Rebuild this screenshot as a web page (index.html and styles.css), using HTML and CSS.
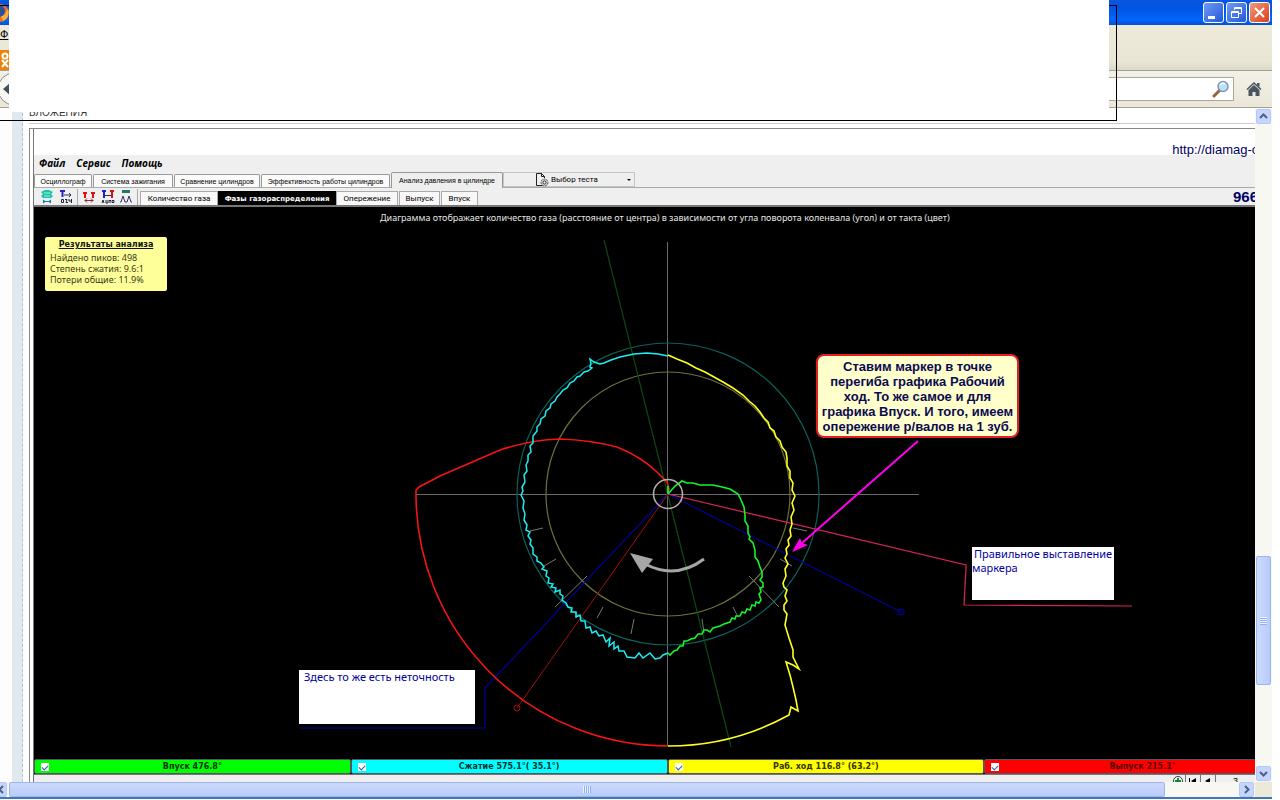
FILE: index.html
```html
<!DOCTYPE html>
<html lang="ru">
<head>
<meta charset="utf-8">
<title>Фазы газораспределения</title>
<link rel="stylesheet" href="styles.css">
</head>
<body>
<div class="window">
  <header class="titlebar">
    <svg class="firefox" width="10" height="22" viewBox="0 0 10 22"><circle cx="0" cy="11" r="9" fill="#e8731c"/><circle cx="-1" cy="9" r="6" fill="#2c4f9e"/><path d="M1 14q4 0 5-4l2-3q2 9-5 12z" fill="#f6b03c"/></svg>
    <div class="winbuttons">
      <button class="winbtn" aria-label="Свернуть"><svg width="15" height="15" viewBox="0 0 15 15"><path d="M2 11h7v3H2z" fill="#fff"/></svg></button>
      <button class="winbtn" aria-label="Восстановить"><svg width="15" height="15" viewBox="0 0 15 15" fill="none" stroke="#fff"><path d="M5.500 5V2.500h7v6H10M5 3.500h8M2.500 6.500h7v6h-7zM2 7.500h8"/></svg></button>
      <button class="winbtn close" aria-label="Закрыть"><svg width="15" height="15" viewBox="0 0 15 15"><path d="M3 3l9 9M12 3l-9 9" stroke="#fff" stroke-width="2"/></svg></button>
    </div>
  </header>
  <div class="chrome">
    <span class="chrome-menu">Ф</span>
    <svg width="10" height="20" viewBox="0 0 10 20"><path d="M0 0h10v20H0z" fill="#ee8208"/><circle cx="5" cy="6" r="2.500" fill="none" stroke="#fff" stroke-width="2"/><path d="M2 10l6 7M8 10l-6 7" stroke="#fff" stroke-width="2"/></svg>
  </div>
  <div class="navbar">
    <svg class="back" width="10" height="34" viewBox="0 0 10 34"><circle cx="14" cy="17" r="16" fill="#f7f7f4" stroke="#8a8a80"/><path d="M3 17l8-7v14z" fill="#43505c"/></svg>
    <div class="search"><input type="text" aria-label="Поиск">
      <svg width="18" height="18" viewBox="0 0 18 18"><path d="M8 10l-6 6" stroke="#9a6337" stroke-width="3" stroke-linecap="round"/><circle cx="11" cy="6.500" r="5" fill="#b9e2fa" stroke="#7f96b4" stroke-width="1.500"/><path d="M8 5q2-3 5-1" stroke="#fff" stroke-width="1.500" fill="none"/></svg>
    </div>
    <button class="home" aria-label="Домой"><svg width="16" height="16" viewBox="0 0 16 16" fill="#4b5560"><path d="M8 1l7.500 7-1 1L8 3 1.500 9l-1-1z"/><path d="M8 4l5.500 5v6H9.500v-4h-3v4H2.500V9zM11 2h2.500v4L11 4z"/></svg></button>
  </div>

  <div class="view">
    <main class="page">
      <div class="gutter"></div>
      <div class="post">
        <h2 class="attach-title">ВЛОЖЕНИЯ</h2>
        <div class="attachment">
          <div class="shot">
            <div class="url">http://diamag-o</div>
            <nav class="menu"><button>Файл</button><button>Сервис</button><button>Помощь</button></nav>
            <div class="tabs">
              <button class="tab t1">Осциллограф</button><button class="tab t2">Система зажигания</button><button class="tab t3">Сравнение цилиндров</button><button class="tab t4">Эффективность работы цилиндров</button><button class="tab t5 current">Анализ давления в цилиндре</button>
              <button class="choose"><svg width="14" height="14" viewBox="0 0 14 14" fill="none" stroke="#222"><path d="M7 12.500H1.500v-12h5l3 3V5M6.500.5v3h3"/><circle cx="9.500" cy="9.500" r="3.500" fill="#ccc" stroke="#555" stroke-dasharray="2 1"/><circle cx="9.500" cy="9.500" r="1.500" fill="#fff" stroke="#333"/></svg><span>Выбор теста</span><i class="caret"></i></button>
            </div>
            <div class="tools">
              <div class="icons">
                <svg width="16" height="16" viewBox="0 0 16 16"><path d="M4 2l2-1h4l2 1 2 1-2 2 2 2-2 2H4L2 7l2-2-2-2z" fill="#20c0a8"/><path d="M5 4h6M5 7h6" stroke="#8fe"/><path d="M4 12.500h8" stroke="#147bb4"/><path d="M4 10.500l3 2-3 2zM12 10.500l-3 2 3 2z" fill="#147bb4"/></svg>
                <svg width="14" height="16" viewBox="0 0 14 16"><path d="M1 2h5M3.500 2v6" stroke="#22c" stroke-width="2"/><path d="M5 6h7M10 4l2 2-2 2" stroke="#235" fill="none"/><path d="M2.500 10.500h2v3h-2zM6 10.500h2l-1 3h2M10 10v2h2M12.500 10v4" stroke="#224" fill="none"/></svg>
                <span class="split"></span>
                <svg width="14" height="16" viewBox="0 0 14 16"><path d="M1 4h4M9 4h4M3 4v5M11 4v5" stroke="#d11" stroke-width="2"/><path d="M3 11.500h8M5 9.500l-2 2 2 2M9 9.500l2 2-2 2" stroke="#922" fill="none"/></svg>
                <svg width="14" height="16" viewBox="0 0 14 16"><path d="M1 2h4M3 2v7" stroke="#22c" stroke-width="2"/><path d="M9 2h4M11 2v7" stroke="#d11" stroke-width="2"/><path d="M4 6.500h6" stroke="#333"/><path d="M1 14l1-3 1 3M5 11v3h2v-3M8 11.500h2M9 11v3M11 11.500h2v2h-2z" stroke="#224" fill="none"/></svg>
                <svg width="14" height="16" viewBox="0 0 14 16"><path d="M3 1h8v3H3z" fill="#276"/><path d="M1 13h1l2-6 2 6h2l2-6 2 6h1" stroke="#336" fill="none"/></svg>
                <span class="split"></span>
              </div>
              <div class="subtabs"><button class="sub s1">Количество газа</button><button class="sub s2 on">Фазы газораспределения</button><button class="sub s3">Опережение</button><button class="sub s4">Выпуск</button><button class="sub s5">Впуск</button></div>
              <b class="count">966</b>
            </div>
            <section class="plot">
              <svg class="canvas" viewBox="34 207 1221 551" width="1221" height="551" fill="none">
                <g stroke="#6a6a6a"><path d="M416 494.500H919M667.500 242V746"/></g>
                <circle cx="668" cy="494" r="151" stroke="#0a605a" stroke-width="1.200"/>
                <circle cx="668" cy="494" r="122" stroke="#706f3e" stroke-width="1.200"/>
                <path stroke="#777" d="M530 531l13-3M544 566l12-7M555 607l32-31M597 618l6-11M631 634l3-15M702 619l2 14M733 607l5 10M749 576l30 31M780 559l12 7M793 528l14 3"/>
                <path d="M604 240L731 747" stroke="#0b4a12" stroke-width="1.200"/>
                <g stroke="#00009c" stroke-width="1.200"><path d="M668 494L901 612"/><circle cx="901" cy="612" r="3"/><path d="M668 494L485 688V728H300"/></g>
                <g stroke="#a11010"><path d="M668 494L517 708"/><circle cx="517" cy="708" r="3"/></g>
                <path d="M668 494L966 565v3L964 605 1132 606" stroke="#d9245e" stroke-width="1.200"/>
                <path d="M668 746A252 252 0 0 1 416 494L416 490 419 487 440 476 470 463 500 450Q530 440 560 439 590 440 617 447 640 456 657 472L667 482 669 489 668 494" stroke="#f51414" stroke-width="1.600"/>
                <path d="M668 494L668 486M668 494L675 486 682 481 687 483 693 483 700 485 713 485 722 487 730 489 738 494 741 500 744 507 745 515 745 521 748 526 748 533 750 537 749 539 753 543 755 550 755 557 758 561 760 567 762 572 762 577 760 580 763 583 763 587 760 588 761 592 759 594 761 600 759 603 756 602 755 606 752 605 750 610 747 609 745 613 742 612 740 616 736 616 735 619 732 618 730 622 724 624 720 626 713 628 710 632 707 630 704 630 702 634 698 634 695 638 691 639 687 641 684 641 683 646 680 646 677 650 674 651 670 655 668 653" stroke="#12f528" stroke-width="1.600"/>
                <path d="M668 356L658 354 647 353 634 354 620 357 611 360 604 363 600 364 597 363 594 362 590 359 591 363 590 367 592 368 588 371 584 372 580 376 577 377 574 381 570 383 567 388 563 390 560 394 557 397 555 401 551 404 550 408 546 411 545 416 541 419 540 424 537 427 537 431 533 436 533 443 530 446 531 452 528 455 528 461 526 465 527 471 524 475 525 482 522 487 523 491 521 495 524 501 523 508 525 514 524 520 527 525 526 530 530 532 528 536 531 540 530 544 533 548 533 554 537 557 537 561 541 563 544 567 542 569 547 571 546 576 549 578 548 583 553 584 551 587 556 588 555 592 560 590 560 594 563 596 562 600 566 603 568 607 572 608 571 612 576 612 576 617 580 615 581 621 585 621 586 628 590 627 592 633 596 631 599 636 603 635 606 642 610 638 609 646 614 642 614 649 618 646 619 651 624 651 627 657 635 658 639 653 643 658 650 653 655 659 660 658 663 655 668 653" stroke="#18eff2" stroke-width="1.500"/>
                <path d="M668 355L677 359 687 363 696 368 705 372 714 377 723 382 733 388 743 395 749 401 755 406 760 412 764 418 768 422 770 428 774 431 776 437 780 441 782 447 786 452 787 458 787 466 790 471 790 478 793 483 792 490 795 496 792 503 794 510 791 517 792 524 790 530 791 536 788 540 789 545 786 549 787 554 785 558 788 564 785 569 786 576 783 583 784 587 787 590 785 596 787 601 784 605 784 610 787 614 785 625 789 638 793 650 793 657 799 669 793 665 786 662 790 675 793 687 796 700 798 711 791 707 790 711 789 715A252 252 0 0 1 668 746" stroke="#ffff20" stroke-width="1.600"/>
                <circle cx="668" cy="494" r="14.500" stroke="#b5a9a9" stroke-width="1.600"/>
                <path d="M704 559Q676 580 645 564" stroke="#a6a6a6" stroke-width="3"/><path d="M630 553L653 559 642 573z" fill="#a6a6a6"/>
                <path d="M918 441L802 543" stroke="#f0e" stroke-width="2"/><path d="M792 552L800 538 802 543 808 545z" fill="#f0e"/>
              </svg>
              <p class="caption">Диаграмма отображает количество газа (расстояние от центра) в зависимости от угла поворота коленвала (угол) и от такта (цвет)</p>
              <div class="results"><h3>Результаты анализа</h3><p>Найдено пиков: 498</p><p>Степень сжатия: 9.6:1</p><p>Потери общие: 11.9%</p></div>
              <div class="callout">Ставим маркер в точке<br>перегиба графика Рабочий<br>ход. То же самое и для<br>графика Впуск. И того, имеем<br>опережение р/валов на 1 зуб.</div>
              <div class="note right">Правильное выставление<br>маркера</div>
              <div class="note left">Здесь то же есть неточность</div>
            </section>
            <div class="legend">
              <label class="bar intake"><input type="checkbox" checked><span>Впуск 476.8°</span></label>
              <label class="bar compress"><input type="checkbox" checked><span>Сжатие 575.1°( 35.1°)</span></label>
              <label class="bar power"><input type="checkbox" checked><span>Раб. ход 116.8° (63.2°)</span></label>
              <label class="bar exhaust"><input type="checkbox" checked><span>Выпуск 215.1°</span></label>
            </div>
            <div class="pager">
              <button aria-label="Добавить"><svg width="10" height="10" viewBox="0 0 10 10"><circle cx="5" cy="5" r="4.500" fill="#fff" stroke="#243"/><path d="M5 2v6M2 5h6" stroke="#183" stroke-width="2"/></svg></button>
              <button aria-label="Первая"><svg width="8" height="8" viewBox="0 0 8 8"><path d="M0 1h1v6H0zM7 1v6L2 4z"/></svg></button>
              <button aria-label="Предыдущая"><svg width="8" height="8" viewBox="0 0 8 8"><path d="M6 1v6L1 4z"/></svg></button>
              <span>3</span>
            </div>
          </div>
        </div>
      </div>
    </main>
    <div class="vscroll">
      <button class="arrow" aria-label="Вверх"><svg width="9" height="9" viewBox="0 0 9 9"><path d="M1 6l3.500-3.500L8 6" fill="none" stroke="#4d6185" stroke-width="2"/></svg></button>
      <div class="track"><div class="thumb"><i></i></div></div>
      <button class="arrow" aria-label="Вниз"><svg width="9" height="9" viewBox="0 0 9 9"><path d="M1 3l3.500 3.500L8 3" fill="none" stroke="#4d6185" stroke-width="2"/></svg></button>
    </div>
  </div>
  <div class="hscroll">
    <button class="arrow first" aria-label="Влево"><svg width="9" height="9" viewBox="0 0 9 9"><path d="M8 1L4.500 4.500 8 8" fill="none" stroke="#4d6185" stroke-width="2"/></svg></button>
    <div class="track"><div class="thumb"><i></i></div></div>
    <button class="arrow" aria-label="Вправо"><svg width="9" height="9" viewBox="0 0 9 9"><path d="M3 1l3.500 3.500L3 8" fill="none" stroke="#4d6185" stroke-width="2"/></svg></button>
    <div class="corner"></div>
  </div>
  <div class="frame"></div>
  <div class="cover"></div>
</div>
</body>
</html>
```
FILE: styles.css
```css
* { box-sizing: border-box; }
body { margin: 0; background: #fff; font-family: "Liberation Sans", Arial, sans-serif; }
button { border: 0; padding: 0; margin: 0; background: none; font: inherit; color: inherit; display: flex; align-items: center; justify-content: center; }
h2, h3, p { margin: 0; }
svg { flex: none; display: block; }
.window { position: relative; display: flex; flex-direction: column; height: calc(100vh - 1px); margin-right: 8px; overflow: hidden; }

.titlebar { flex: none; height: 25px; display: flex; align-items: center; justify-content: space-between; background: linear-gradient(#0a56dc, #0054e3 30%, #0465fb 80%, #0350d4); }
.winbuttons { display: flex; gap: 2px; padding-right: 2px; }
.winbtn { width: 21px; height: 21px; border: 1px solid #fff; border-radius: 3px; background: linear-gradient(135deg, #6f9cf5, #2356d8); }
.winbtn.close { background: linear-gradient(135deg, #f0997c, #d8401c); }
.chrome { flex: none; height: 46px; display: flex; flex-direction: column; justify-content: space-between; padding-top: 3px; background: linear-gradient(#edeadb, #eae6d5 80%, #dedac9); border-bottom: 1px solid #a5a192; }
.chrome-menu { font-size: 11px; line-height: 13px; text-decoration: underline; }
.navbar { flex: none; height: 37px; display: flex; align-items: center; gap: 10px; padding-right: 8px; background: linear-gradient(#f3f1e8, #eae7d9); border-bottom: 1px solid #a5a192; }
.search { flex: 1; height: 24px; display: flex; align-items: center; padding-right: 3px; background: #fff; border: 1px solid #aaa79a; }
.search input { flex: 1; border: 0; outline: 0; background: none; }
.home { width: 20px; }

.view { flex: 1; display: flex; min-height: 0; }
.page { flex: 1; min-width: 0; display: flex; overflow: hidden; background: #fff; }
.gutter { flex: none; width: 23px; border-left: 12px solid #fdfdfd; background: #dfe9ef; border-right: 1px dashed #b9c3c9; }
.post { flex: 1; min-width: 0; padding-left: 6px; display: flex; flex-direction: column; }
.attach-title { flex: none; height: 16px; margin-bottom: 4px; border-bottom: 1px solid #ccc; font-size: 10px; line-height: 9px; font-weight: 400; color: #333; }
.attachment { flex: 1; min-height: 0; display: flex; padding-left: 3px; border-top: 1px solid #888; border-left: 1px solid #888; overflow: hidden; }
.shot { flex: 1; min-width: 0; display: flex; flex-direction: column; border-left: 1px solid #777; background: #efefef; }
.url { flex: none; height: 26px; background: #fff; color: #000066; font-size: 13px; line-height: 42px; text-align: right; white-space: nowrap; margin-right: -4px; }
.menu { flex: none; height: 17px; display: flex; gap: 11px; padding-left: 5px; font: italic 700 10px/17px "Open Sans", sans-serif; }

.tabs { flex: none; height: 16px; display: flex; align-items: flex-end; border-bottom: 1px solid #aaa; font: 7px "Liberation Sans", sans-serif; white-space: nowrap; }
.tab { height: 13px; background: #fbfbfb; border: 1px solid #999; border-radius: 2px 2px 0 0; border-bottom: 0; margin-right: 1px; }
.t1 { width: 58px; }
.t2 { width: 80px; }
.t3 { width: 86px; }
.t4 { width: 129px; }
.t5 { width: 112px; }
.tab.current { height: 16px; background: #efefef; margin: 0 0 -1px; }
.choose { width: 132px; height: 15px; padding: 0 3px 0 31px; gap: 2px; justify-content: flex-start; border: 1px solid #c4c4c4; }
.caret { margin-left: auto; border: 2px solid transparent; border-top-color: #000; border-bottom: 0; }

.tools { flex: none; height: 19px; display: flex; align-items: flex-end; border-bottom: 2px solid #777; font: 7px "Liberation Sans", sans-serif; }
.icons { height: 17px; flex: none; width: 106px; display: flex; align-items: center; justify-content: space-between; padding: 0 2px 0 5px; }
.split { width: 1px; height: 16px; background: #aaa; }
.subtabs { display: flex; align-items: flex-end; flex: 1; }
.sub { height: 14px; border: 1px solid #aaa; border-bottom: 0; background: #f8f8f8; margin-right: 1px; white-space: nowrap; }
.sub.on { background: #000; border-color: #000; color: #fff; font: 700 7px "DejaVu Sans", sans-serif; }
.s1 { width: 78px; margin-right: 0; }
.s2 { width: 118px; margin-right: 0; }
.s3 { width: 62px; }
.s4 { width: 41px; }
.s5 { width: 37px; }
.choose, .sub { font-size: 8px; font-family: Roboto, sans-serif; }
.count { color: #000066; font: 700 15px/17px "Liberation Sans", sans-serif; margin-right: -3px; }

.plot { flex: 1; min-height: 0; position: relative; overflow: hidden; background: #000; }
.canvas { position: absolute; left: 0; top: 0; }
.caption { position: absolute; left: 346px; top: 4px; color: #e4e4e4; font: 9px/13px "Noto Sans", sans-serif; white-space: nowrap; }
.results { position: absolute; left: 11px; top: 30px; width: 122px; height: 54px; padding: 2px 5px; background: #ffff99; border-radius: 2px; color: #3a3a20; font: 9px/11px "Noto Sans", sans-serif; white-space: nowrap; }
.results h3 { font: 700 8px/11px "DejaVu Sans", sans-serif; text-decoration: underline; text-align: center; margin-bottom: 2px; color: #111; }
.callout { position: absolute; left: 782px; top: 147px; width: 203px; height: 84px; padding: 3px 0; border: 2px solid #e32020; border-radius: 8px; background: #ffffcc; color: #0b0b50; font-weight: 700; font-size: 13px; line-height: 15px; text-align: center; white-space: nowrap; }
.note { position: absolute; background: #fff; color: #0000a0; font: 11px/14px "Noto Sans", sans-serif; white-space: nowrap; }
.note.right { left: 938px; top: 340px; width: 142px; height: 53px; text-indent: 2px; }
.note.left { left: 265px; top: 463px; width: 176px; height: 54px; padding-left: 5px; }

.legend { flex: none; height: 17px; display: grid; grid-template-columns: repeat(4, 1fr); margin-right: -46px; padding: 1px 0; background: #000; border-bottom: 1px solid #777; }
.bar { display: flex; align-items: center; padding-left: 6px; border: 1px solid #556; border-radius: 2px; font: 700 8px/12px "DejaVu Sans", sans-serif; color: #063306; }
.bar span { flex: 1; text-align: center; padding: 1px 14px 0 0; white-space: nowrap; }
.bar input { appearance: none; flex: none; width: 8px; height: 8px; margin: 0; background: #fff; display: grid; place-items: center; }
.bar input::after { content: ""; width: 5px; height: 3px; border: solid #2a62b0; border-width: 0 0 1px 1px; transform: rotate(-45deg); }
.intake { background: #0f0; }
.compress { background: #0ff; color: #033; }
.power { background: #ff0; color: #330; }
.exhaust { background: #f00; color: #500; }
.pager { flex: none; height: 7px; overflow: hidden; display: flex; align-items: flex-start; justify-content: flex-end; padding-right: 17px; font-size: 9px; line-height: 13px; }
.pager button { width: 15px; height: 12px; border-right: 1px solid #777; }
.pager span { width: 22px; text-align: right; }

.vscroll { flex: none; width: 17px; display: flex; flex-direction: column; background: #f8f8f3; padding: 1px 0; }
.arrow { flex: none; width: 15px; height: 15px; margin: 0 1px; border: 1px solid #b4c8f6; border-radius: 2px; background: #c6d5fd; }
.track { flex: 1; display: flex; }
.vscroll .track { flex-direction: column; }
.thumb { display: flex; align-items: center; justify-content: center; border: 1px solid #9db5ee; border-radius: 2px; }
.vscroll .thumb { height: 129px; margin: 432px 1px 0; background: linear-gradient(90deg, #cbdafe, #b9cbf8); }
.vscroll .thumb i { width: 7px; height: 8px; background: repeating-linear-gradient(#eef4fe 0 1px, #8cb0f8 1px 2px); }
.hscroll { flex: none; height: 17px; display: flex; align-items: center; background: #f8f8f3; border-bottom: 2px solid #3f77bd; overflow: hidden; }
.hscroll .arrow.first { margin-left: -8px; }
.hscroll .track { height: 15px; }
.hscroll .thumb { width: 94%; margin-left: 1px; background: linear-gradient(#cbdafe, #b9cbf8); }
.hscroll .thumb i { width: 8px; height: 7px; background: repeating-linear-gradient(90deg, #eef4fe 0 1px, #8cb0f8 1px 2px); }
.corner { width: 17px; height: 17px; background: #ece9d8; }

.cover { position: absolute; left: 9px; top: 0; right: 163px; height: 112px; background: #fff; }
.frame { position: absolute; left: 0; top: 5px; right: 155px; height: 116px; border: 1px solid #000; border-left: 0; }
```
